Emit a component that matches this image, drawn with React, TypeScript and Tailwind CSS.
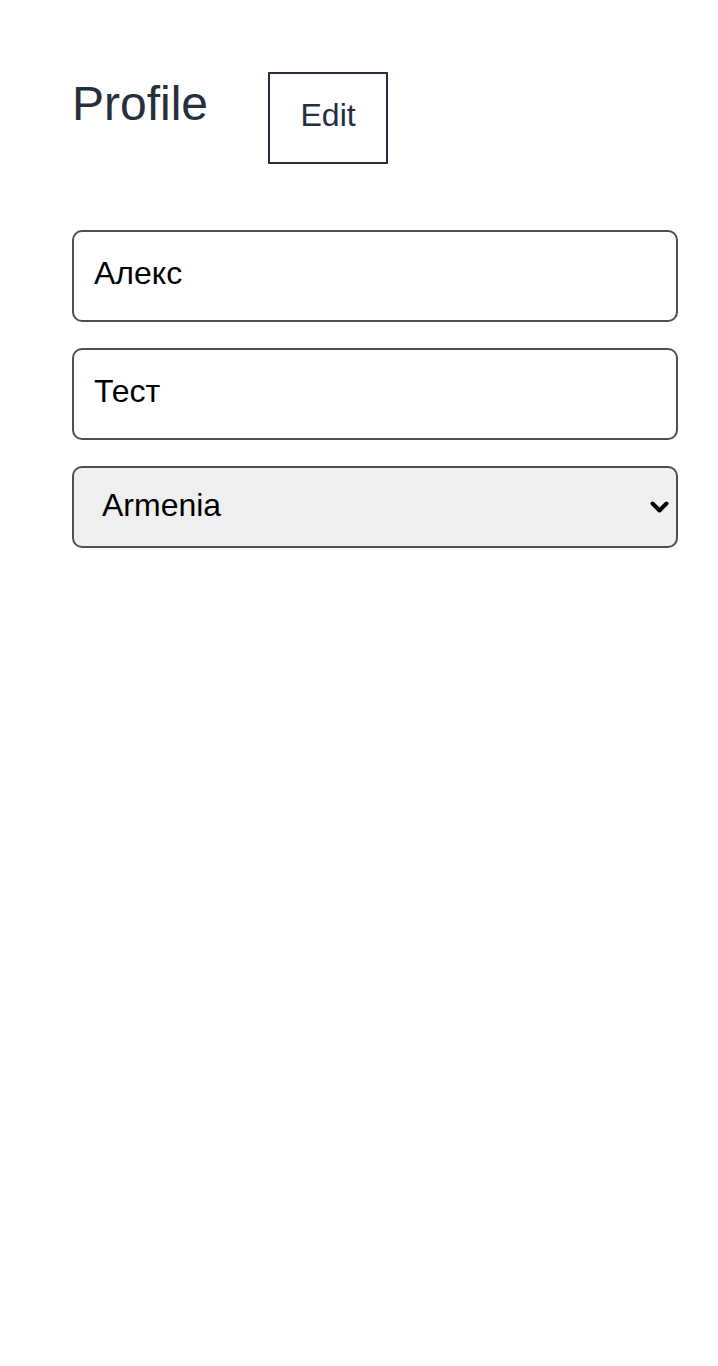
import { useState } from 'react';

export default function App() {
    const [firstName, setFirstName] = useState('Алекс');
    const [lastName, setLastName] = useState('Тест');
    const [country, setCountry] = useState('Armenia');

    return (
        <div className="min-h-screen bg-white px-[72px] pt-[72px] font-['Liberation_Sans',Arial,sans-serif]">
            <div className="flex items-start">
                <h1 className="-mt-[4px] text-[48px] leading-normal font-normal text-[#25303c]">Profile</h1>
                <button
                    type="button"
                    className="ml-[60px] h-[92px] w-[120px] border-2 border-[#25303c] pb-[6px] text-[32px] leading-normal text-[#25303c]"
                >
                    Edit
                </button>
            </div>

            <form className="mt-[66px] flex w-[606px] flex-col gap-[26px]">
                <input
                    value={firstName}
                    onChange={(e) => setFirstName(e.target.value)}
                    className="h-[92px] w-full rounded-[10px] border-2 border-[#4b4f58] pl-[20px] pb-[6px] text-[32px] text-black outline-none"
                />
                <input
                    value={lastName}
                    onChange={(e) => setLastName(e.target.value)}
                    className="h-[92px] w-full rounded-[10px] border-2 border-[#4b4f58] pl-[20px] pb-[6px] text-[32px] text-black outline-none"
                />
                <div className="relative">
                    <select
                        value={country}
                        onChange={(e) => setCountry(e.target.value)}
                        className="h-[82px] w-full appearance-none rounded-[10px] border-2 border-[#4b4f58] bg-[#efefef] pl-[28px] pr-[40px] pb-[4px] text-[32px] text-black outline-none"
                    >
                        <option>Armenia</option>
                        <option>Georgia</option>
                        <option>Russia</option>
                    </select>
                    {/* chevron like the native arrow */}
                    <svg
                        className="pointer-events-none absolute right-[9px] top-[35px] h-[13px] w-[19px]"
                        viewBox="0 0 19 13"
                        fill="none"
                    >
                        <path d="M2.5 2.5 L9.5 9.5 L16.5 2.5" stroke="black" strokeWidth="4" strokeLinecap="round" strokeLinejoin="round" />
                    </svg>
                </div>
            </form>
        </div>
    );
}
